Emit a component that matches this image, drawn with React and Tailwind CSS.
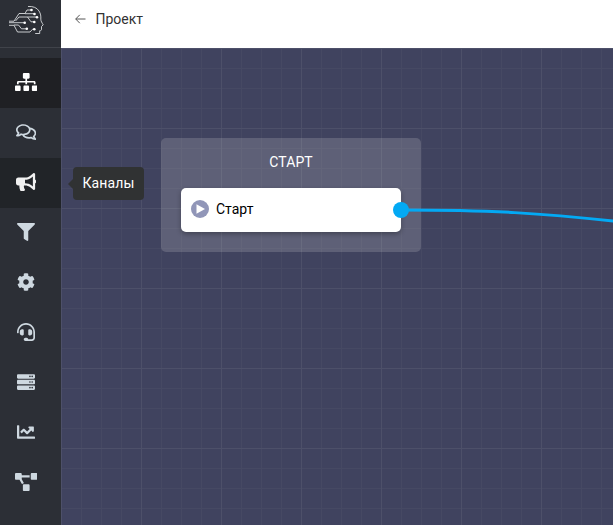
import React from "react";
import {
  FaSitemap, FaRegComments, FaBullhorn, FaFilter, FaCog,
  FaHeadset, FaServer, FaChartLine, FaProjectDiagram,
} from "react-icons/fa";

const items = [
  { Icon: FaSitemap, row: "bg-[#1f2024] text-white", size: "w-[22.5px]" },
  { Icon: FaRegComments, row: "text-[#ced8e0]", size: "w-[20.25px]" },
  { Icon: FaBullhorn, row: "bg-[#212428] text-[#f1f1f1]", size: "w-[20.25px]" },
  { Icon: FaFilter, row: "text-[#ced8e0]", size: "w-[18px]" },
  { Icon: FaCog, row: "text-[#ced8e0]", size: "w-[18px]" },
  { Icon: FaHeadset, row: "text-[#ced8e0]", size: "w-[18px]" },
  { Icon: FaServer, row: "text-[#ced8e0]", size: "w-[18px]" },
  { Icon: FaChartLine, row: "text-[#ced8e0]", size: "w-[18px]" },
  { Icon: FaProjectDiagram, row: "text-[#ced8e0]", size: "w-[22.5px]" },
];

function Logo() {
  return (
    <svg className="h-[30px] w-9" viewBox="0 0 36 30" fill="none" stroke="#e4e6e8" strokeWidth="0.85">
      <path d="M19 1.500c5-.4 9 1.200 11 4.500 1.700 2.700 2 5 1.800 8.200 0 2 1.200 3.500 2.400 5.600l-1.700 1.700v3.200c0 .6-1 1-1.800 1v2.800h-4.500" />
      <path d="M0 16.200h5l5-7.700h6l2-3.500h4.500" />
      <path d="M0 17.700h15.500M6.500 16l3.500-4h18M16 8.700h9.500" />
      <path d="M18.500 12l3.500 4.800h3.300M0 20.300h5l3.500 6.700h12.500l2.500-2.700h2" />
      <path d="M5 20h4.500l3 3.800h5" />
      <g fill="#fff" stroke="none">
        <circle cx="22.500" cy="5" r="1.300" />
        <circle cx="25.500" cy="9" r="1.300" />
        <circle cx="28" cy="12.200" r="1.300" />
        <circle cx="25.300" cy="17" r="1.300" />
        <circle cx="15.700" cy="17.700" r="1.300" />
        <circle cx="17.800" cy="23.800" r="1.300" />
        <circle cx="25.300" cy="24.300" r="1.300" />
      </g>
    </svg>
  );
}

function Sidebar() {
  return (
    <aside className="flex w-[61px] shrink-0 flex-col bg-[#2c2f36]">
      <div className="h-12 border-b border-[#40434a] pt-[5px] pl-[9px]">
        <Logo />
      </div>
      <nav className="flex flex-col pt-[10px]">
        {items.map(({ Icon, row, size }, i) => (
          <a key={i} className={`flex h-[50px] items-center pb-[2px] ${row}`}>
            <span className="flex w-[52px] justify-center">
              <Icon className={`h-[18px] ${size}`} />
            </span>
          </a>
        ))}
      </nav>
    </aside>
  );
}

function Canvas() {
  return (
    <main className="relative flex-1 overflow-hidden bg-[#40435f] bg-[linear-gradient(#4d5069_1px,transparent_1px),linear-gradient(90deg,#4d5069_1px,transparent_1px),linear-gradient(#464963_1px,transparent_1px),linear-gradient(90deg,#464963_1px,transparent_1px)] bg-[size:80px_80px,80px_80px,20px_20px,20px_20px]">
      <section className="absolute top-[90px] left-[100px] h-[114px] w-[260px] rounded-[5px] bg-[#d5d5d5]/20 px-5 pt-[14px]">
        <h2 className="text-center text-sm leading-5 font-normal tracking-[0.1px] text-white">СТАРТ</h2>
        <div className="mt-4 flex h-11 items-center rounded-[5px] bg-white pb-[2px] pl-[10px] shadow-[0_2px_5px_rgba(0,0,0,0.3)]">
          <svg className="h-[18px] w-[18px]" viewBox="0 0 18 18">
            <circle cx="9" cy="9" r="9" fill="#9196b8" />
            <path d="M5.500 4.300v9.400L14 9z" fill="#fff" />
          </svg>
          <span className="ml-[7px] text-sm text-black">Старт</span>
        </div>
      </section>
      <svg className="absolute top-0 left-0 h-[477px] w-[552px]" viewBox="0 0 552 477">
        <path d="M340 162C430 162 480 165 560 174" fill="none" stroke="#03a9f4" strokeWidth="3" />
        <circle cx="340" cy="162" r="8" fill="#03a9f4" />
      </svg>
      <div className="absolute top-[119px] left-3 flex h-[33px] w-[71px] items-center justify-center rounded-[4px] bg-[#303233] pb-px text-sm font-normal tracking-[0.15px] text-white">
        <span className="absolute top-[12px] -left-[5px] border-y-[5px] border-r-[5px] border-y-transparent border-r-[#303233]" />
        Каналы
      </div>
    </main>
  );
}

export default function App() {
  return (
    <div className="flex h-[525px] w-[613px] overflow-hidden font-['Roboto','Liberation_Sans',sans-serif]">
      <Sidebar />
      <div className="flex min-w-0 flex-1 flex-col">
        <header className="flex h-12 items-start bg-white pt-[9px] pl-[14px] text-sm leading-5 text-[#333]">
          <svg className="mt-[5px] h-[10px] w-[11px]" viewBox="0 0 11 10" fill="none" stroke="#555" strokeWidth="1">
            <path d="M10.500 5H.8M4.800.8L.7 5l4.100 4.200" />
          </svg>
          <span className="ml-[9.5px]">Проект</span>
        </header>
        <Canvas />
      </div>
    </div>
  );
}
